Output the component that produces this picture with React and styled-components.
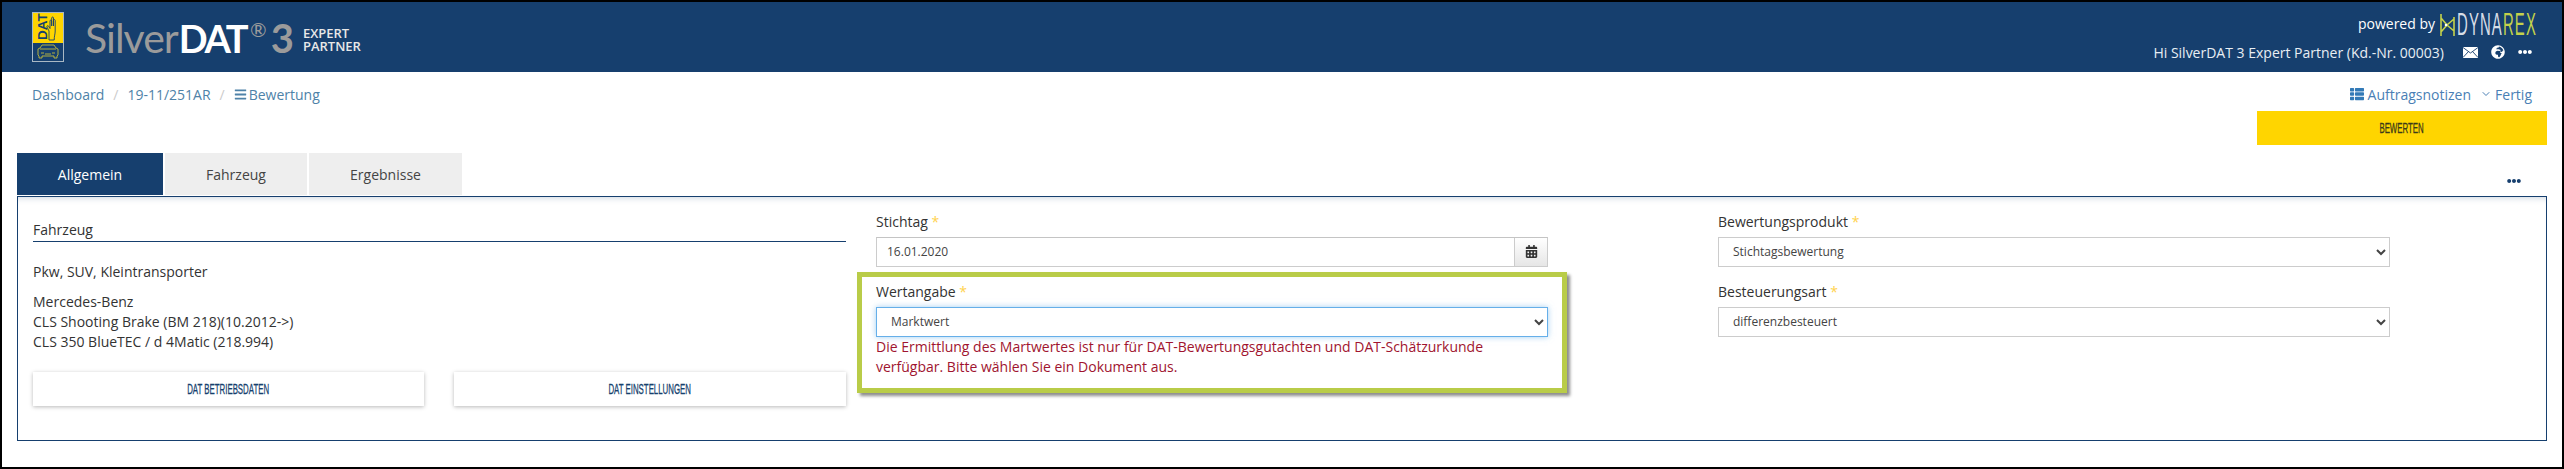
import React from "react";
import styled, { createGlobalStyle } from "styled-components";
import { FaBars, FaCalendarAlt, FaGlobeAfrica, FaEllipsisH, FaThList } from "react-icons/fa";
import { ChevronDown } from "lucide-react";

const Global = createGlobalStyle`
  html, body { margin: 0; padding: 0; background: #000; }
  * { box-sizing: border-box; }
  body { font-family: "Open Sans", "Liberation Sans", sans-serif; font-size: 14px; color: #333; }
`;

const Page = styled.div`
  width: 2564px; height: 469px; background: #fff;
  border: 2px solid #000; overflow: hidden;
`;
const Header = styled.header`
  height: 70px; background: #163f6e; display: flex; justify-content: space-between;
  padding: 10px 30px 0 30px;
`;
const Brand = styled.div`display: flex; align-items: flex-start;`;
const LogoMark = styled.svg`width: 32px; height: 50px; display: block;`;
const Wordmark = styled.div`
  margin-left: 21px; margin-top: 1px; height: 50px; display: flex; align-items: baseline;
  font-family: Lato, "Open Sans", sans-serif; font-size: 41px; line-height: 50px; color: #9b9b9b;
`;
const WordLight = styled.span`letter-spacing: -1px;`;
const WordBold = styled.span`color: #fff; font-weight: 700; font-size: 38px; margin-left: 1px; letter-spacing: -2.4px;`;
const Reg = styled.span`font-size: 20px; font-weight: 400; align-self: flex-start; line-height: 32px; margin: 0 4px 0 4px;`;
const Three = styled.span`font-weight: 700; font-size: 40px;`;
const Edition = styled.div`
  align-self: flex-start; margin: 14px 0 0 9px; color: #e8e8e8; font-family: "Open Sans", sans-serif; font-size: 13px; line-height: 13px;
  font-weight: 600;
`;
const HeaderRight = styled.div`display: flex; flex-direction: column; align-items: flex-end;`;
const Powered = styled.div`display: flex; align-items: center; height: 24px; color: #fff; font-size: 14px; margin-right: -5px; margin-top: 1px;`;
const PoweredLabel = styled.span`margin-top: -3px;`;
const RexMark = styled.svg`width: 16px; height: 24px; margin: 0 2px 0 4px;`;
const RexName = styled.span`
  display: inline-block; font-family: "Liberation Sans", sans-serif; font-size: 31px; line-height: 24px; color: #c3d14b;
  width: 80px; transform: scaleX(.48); transform-origin: left center; letter-spacing: 2.4px; white-space: nowrap;
`;
const Muted = styled.span`color: #d6dde6;`;
const Greeting = styled.div`display: flex; align-items: center; height: 20px; margin-top: 5px; color: #e8eef4; font-size: 14px;`;
const HeadIcons = styled.span`display: flex; align-items: center; gap: 13px; margin-left: 19px; font-size: 14px; color: #fff;`;
const Mail = styled.svg`width: 15px; height: 11px;`;

const Sub = styled.div`height: 81px; padding: 0 15px 0 30px; display: flex; justify-content: space-between; align-items: flex-start;`;
const Crumbs = styled.nav`display: flex; align-items: center; height: 20px; margin-top: 12px; color: #4e82a8; font-size: 14px;`;
const Sep = styled.span`color: #ccc; margin: 0 9px;`;
const CrumbIcon = styled(FaBars)`font-size: 13px; margin-right: 2px;`;
const Actions = styled.div`display: flex; flex-direction: column; align-items: flex-end;`;
const ActionLinks = styled.div`display: flex; align-items: center; height: 20px; margin-top: 12px; margin-right: 15px; color: #4a7fb5; font-size: 14px;`;
const ListIcon = styled(FaThList)`font-size: 14px; margin-right: 4px; color: #337ab7;`;
const Chevron = styled(ChevronDown)`margin: 0 3px 0 9px;`;
const CondensedText = styled.span`
  display: inline-block; font-family: "Liberation Sans", sans-serif; font-size: 14px; transform: scaleX(.56); white-space: nowrap;
  text-transform: uppercase; -webkit-text-stroke: .3px currentColor;
`;
const Rate = styled.button`
  width: 290px; height: 34px; margin-top: 7px; border: 0; background: #ffd500; color: #3a3a1a; padding: 0; display: flex; align-items: center; justify-content: center;
`;

const TabRow = styled.div`display: flex; align-items: flex-end; justify-content: space-between; margin: 0 15px; height: 42px;`;
const Tabs = styled.div`display: flex; gap: 2px;`;
const Tab = styled.div`
  width: ${p => p.$w}px; height: 42px; display: flex; align-items: center; justify-content: center; font-size: 14px;
  background: ${p => p.$active ? "#163f6e" : "#eee"}; color: ${p => p.$active ? "#fff" : "#444"};
`;
const More = styled(FaEllipsisH)`color: #163f6e; font-size: 14px; margin: 0 26px 7px 0;`;

const Panel = styled.section`
  margin: 1px 15px 0; height: 245px; border: 1.5px solid #163f6e;
  box-shadow: inset 0 6px 6px -5px rgba(22,63,110,.22);
  display: grid; grid-template-columns: 813px 672px 812px; column-gap: 30px; padding: 14.5px 0 0 15px;
`;
const VehicleCol = styled.div``;
const Heading = styled.div`height: 30px; padding-top: 8px; line-height: 20px; border-bottom: 1.5px solid #163f6e; font-size: 14px;`;
const Line = styled.div`line-height: 20px; font-size: 14px;`;
const Category = styled(Line)`margin-top: 20px; margin-bottom: 10px;`;
const BtnRow = styled.div`display: grid; grid-template-columns: 391px 392px; column-gap: 30px; margin-top: 20px;`;
const GhostBtn = styled.button`
  height: 34px; border: 0; background: #fff; color: #163f6e; box-shadow: 0 1px 4px rgba(0,0,0,.28); padding: 0; display: flex; align-items: center; justify-content: center;
`;
const Field = styled.div`height: 55px;`;
const LowerField = styled(Field)`margin-top: 15px;`;
const Label = styled.label`display: block; line-height: 20px; height: 20px; margin-bottom: 5px; font-size: 14px;`;
const Star = styled.span`color: #ffd24d;`;
const InputGroup = styled.div`display: flex; height: 30px; border: 1px solid #ccc; border-top-color: #c4c4c4;`;
const DateInput = styled.input`flex: 1; border: 0; padding: 0 10px; font: 12px "Open Sans", sans-serif; color: #444; outline: none; min-width: 0;`;
const Addon = styled.span`width: 33px; border-left: 1px solid #ccc; background: linear-gradient(#fff, #e6e6e6); display: flex; align-items: center; justify-content: center; font-size: 13px; color: #333;`;
const Select = styled.select`
  display: block; width: 100%; height: 30px; padding: 0 0 0 10px; background: #fff; color: #444;
  font: 12px "Open Sans", sans-serif; border: 1px solid ${p => p.$focus ? "#66afe9" : "#ccc"};
  box-shadow: ${p => p.$focus ? "0 0 6px rgba(102,175,233,.6)" : "none"}; outline: none; border-radius: 0;
`;
const Highlight = styled.div`
  margin: 5px -19px 0; padding: 5px 14px 0; height: 121px; border: 5px solid #b9cc48;
  box-shadow: 3px 3px 3px rgba(0,0,0,.45);
`;
const ErrorText = styled.div`color: #a0142f; font-size: 14px; line-height: 20px;`;
const ProductCol = styled.div`margin-left: 140px;`;

export default function App() {
  return (
    <Page>
      <Global />
      <Header>
        <Brand>
          <LogoMark viewBox="0 0 32 50">
            <rect x=".5" y=".5" width="31" height="49" fill="#163f6e" stroke="#a9b8c4" />
            <rect x="1" y="1" width="30" height="30" fill="#ffd500" />
            <text transform="translate(14.500 28) rotate(-90)" fontFamily="Liberation Sans" fontWeight="700" fontSize="13.5" fill="#163f6e">DAT</text>
            <path d="M17 28v-9l-2-4c-.6-1.300 1-2 1.600-.8l1.400 2.300V9c0-1.300 1.600-1.300 1.700 0v5V6c0-1.300 1.800-1.300 1.800 0v8-5.500c0-1.300 1.700-1.300 1.700 0V19c0 3-1 5-1 9z" fill="#ffd500" stroke="#163f6e" strokeWidth=".9" />
            <path d="M8 36l2-3h12l2 3 2 1v6l-1 1v2h-3v-2H10v2H7v-2l-1-1v-6zM8 37h16M9 41h3M20 41h3M13 42h6" fill="none" stroke="#c4bd3c" strokeWidth=".9" />
          </LogoMark>
          <Wordmark>
            <WordLight>Silver</WordLight><WordBold>DAT</WordBold><Reg>®</Reg><Three>3</Three>
            <Edition>EXPERT<br />PARTNER</Edition>
          </Wordmark>
        </Brand>
        <HeaderRight>
          <Powered>
            <PoweredLabel>powered by</PoweredLabel>
            <RexMark viewBox="0 0 16 24">
              <path d="M2 1v22M15 4v19M2 5l6 7-6 7M15 6L8 12l7 6" fill="none" stroke="#c3d14b" strokeWidth="1.600" />
              <circle cx="7" cy="12" r="1.300" fill="#fff" />
            </RexMark>
            <RexName><Muted>DYNA</Muted>REX</RexName>
          </Powered>
          <Greeting>
            Hi SilverDAT 3 Expert Partner (Kd.-Nr. 00003)
            <HeadIcons>
              <Mail viewBox="0 0 15 11">
                <path d="M0 0h15v11H0z" fill="#fff" />
                <path d="M0 .5l7.500 5.500L15 .5M0 10.500l5.500-6M15 10.500l-5.500-6" fill="none" stroke="#163f6e" strokeWidth=".9" />
              </Mail>
              <FaGlobeAfrica />
              <FaEllipsisH />
            </HeadIcons>
          </Greeting>
        </HeaderRight>
      </Header>
      <Sub>
        <Crumbs>Dashboard<Sep>/</Sep>19-11/251AR<Sep>/</Sep><CrumbIcon />Bewertung</Crumbs>
        <Actions>
          <ActionLinks><ListIcon />Auftragsnotizen<Chevron size={12} strokeWidth={2} />Fertig</ActionLinks>
          <Rate><CondensedText>Bewerten</CondensedText></Rate>
        </Actions>
      </Sub>
      <TabRow>
        <Tabs>
          <Tab $w={146} $active>Allgemein</Tab>
          <Tab $w={142}>Fahrzeug</Tab>
          <Tab $w={153}>Ergebnisse</Tab>
        </Tabs>
        <More />
      </TabRow>
      <Panel>
        <VehicleCol>
          <Heading>Fahrzeug</Heading>
          <Category>Pkw, SUV, Kleintransporter</Category>
          <Line>Mercedes-Benz</Line>
          <Line>CLS Shooting Brake (BM 218)(10.2012-&gt;)</Line>
          <Line>CLS 350 BlueTEC / d 4Matic (218.994)</Line>
          <BtnRow>
            <GhostBtn><CondensedText>DAT Betriebsdaten</CondensedText></GhostBtn>
            <GhostBtn><CondensedText>DAT Einstellungen</CondensedText></GhostBtn>
          </BtnRow>
        </VehicleCol>
        <div>
          <Field>
            <Label>Stichtag <Star>*</Star></Label>
            <InputGroup>
              <DateInput defaultValue="16.01.2020" />
              <Addon><FaCalendarAlt /></Addon>
            </InputGroup>
          </Field>
          <Highlight>
            <Label>Wertangabe <Star>*</Star></Label>
            <Select $focus defaultValue="Marktwert"><option>Marktwert</option></Select>
            <ErrorText>Die Ermittlung des Martwertes ist nur für DAT-Bewertungsgutachten und DAT-Schätzurkunde verfügbar. Bitte wählen Sie ein Dokument aus.</ErrorText>
          </Highlight>
        </div>
        <ProductCol>
          <Field>
            <Label>Bewertungsprodukt <Star>*</Star></Label>
            <Select defaultValue="Stichtagsbewertung"><option>Stichtagsbewertung</option></Select>
          </Field>
          <LowerField>
            <Label>Besteuerungsart <Star>*</Star></Label>
            <Select defaultValue="differenzbesteuert"><option>differenzbesteuert</option></Select>
          </LowerField>
        </ProductCol>
      </Panel>
    </Page>
  );
}
